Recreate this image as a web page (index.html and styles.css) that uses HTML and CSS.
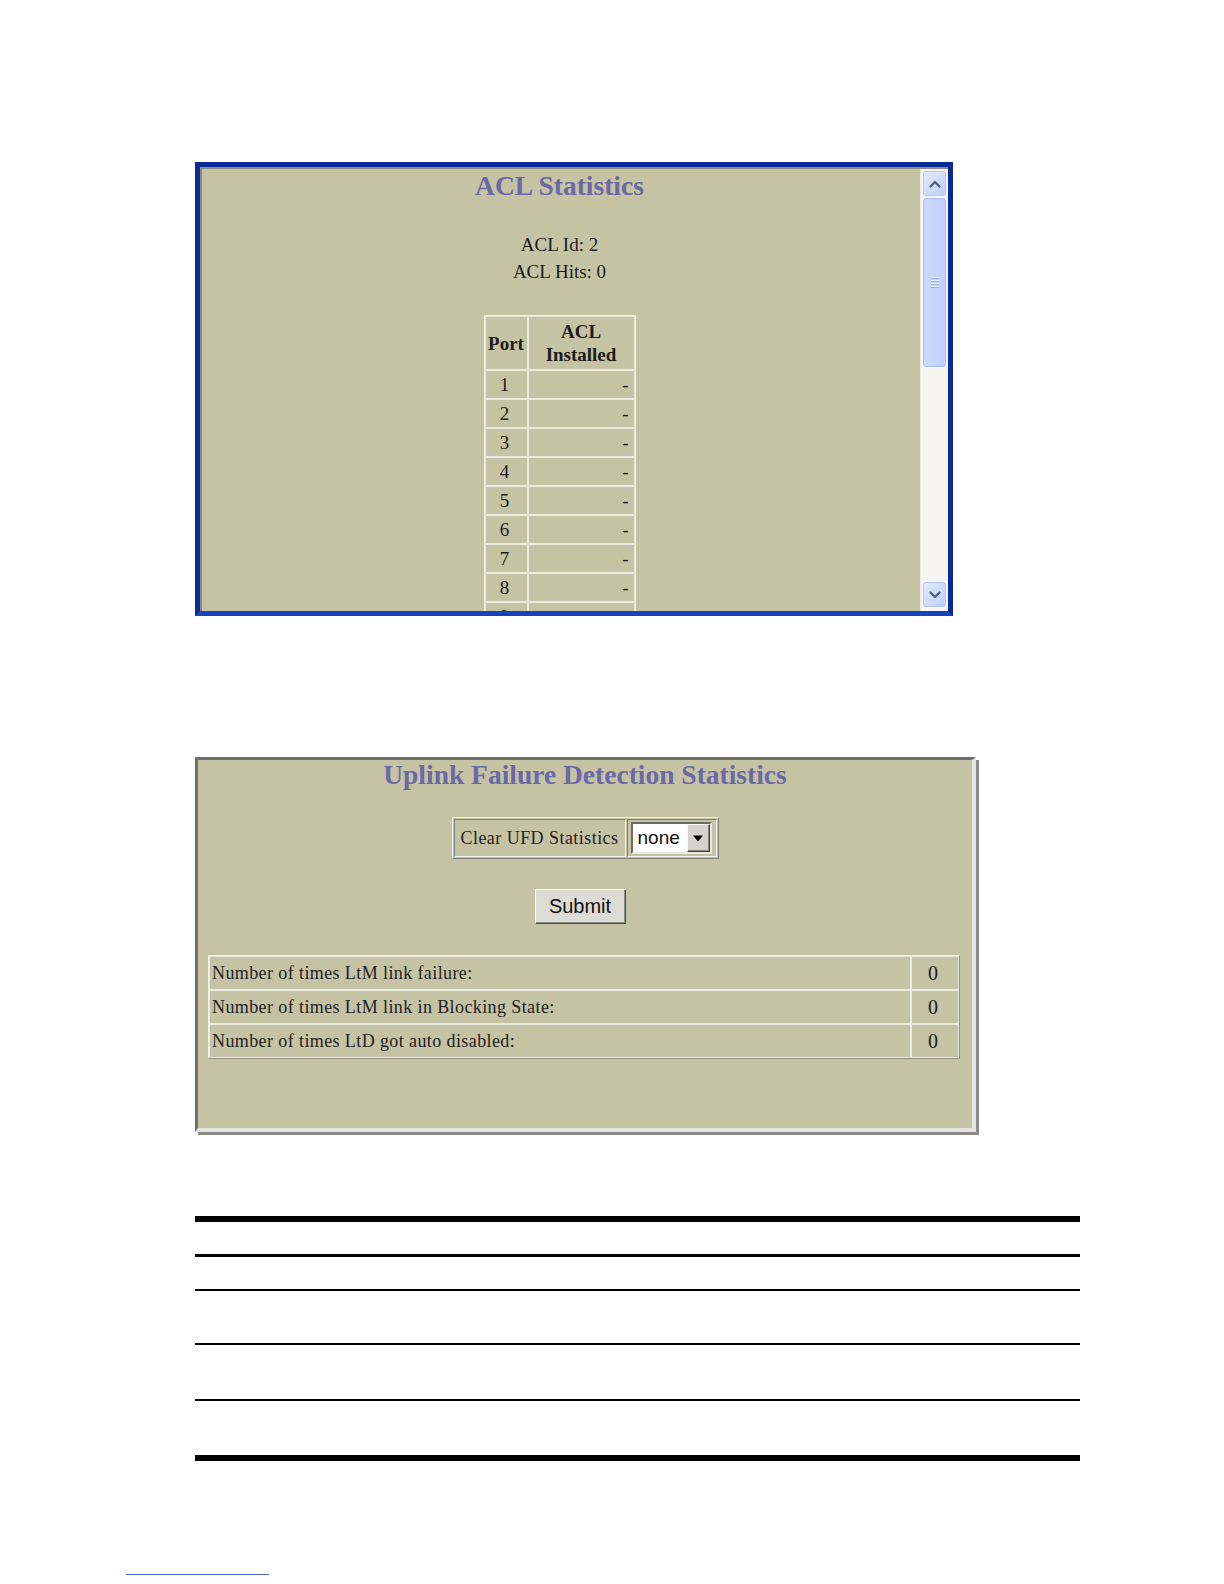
FILE: index.html
```html
<!DOCTYPE html>
<html>
<head>
<meta charset="utf-8">
<title>ACL and UFD Statistics</title>
<link rel="stylesheet" href="styles.css">
</head>
<body>
<div class="page">
  <div class="acl-frame">
    <div class="acl-inner">
      <div class="acl-content">
        <h1 class="title">ACL Statistics</h1>
        <p class="info info-first">ACL Id: 2</p>
        <p class="info">ACL Hits: 0</p>
        <table class="port-table">
          <thead>
            <tr><th class="c-port">Port</th><th class="c-acl">ACL<br>Installed</th></tr>
          </thead>
          <tbody>
            <tr><td class="c-port">1</td><td class="c-acl">-</td></tr>
            <tr><td class="c-port">2</td><td class="c-acl">-</td></tr>
            <tr><td class="c-port">3</td><td class="c-acl">-</td></tr>
            <tr><td class="c-port">4</td><td class="c-acl">-</td></tr>
            <tr><td class="c-port">5</td><td class="c-acl">-</td></tr>
            <tr><td class="c-port">6</td><td class="c-acl">-</td></tr>
            <tr><td class="c-port">7</td><td class="c-acl">-</td></tr>
            <tr><td class="c-port">8</td><td class="c-acl">-</td></tr>
            <tr><td class="c-port">9</td><td class="c-acl">-</td></tr>
          </tbody>
        </table>
      </div>
      <div class="scrollbar">
        <div class="sb-btn">
          <svg width="14" height="10" viewBox="0 0 14 10"><path d="M2.5 7.5 L7 3 L11.5 7.5" fill="none" stroke="#4d6185" stroke-width="2.4" stroke-linecap="round" stroke-linejoin="round"/></svg>
        </div>
        <div class="sb-thumb">
          <span class="grip"></span><span class="grip"></span><span class="grip"></span><span class="grip"></span>
        </div>
        <div class="sb-space"></div>
        <div class="sb-btn">
          <svg width="14" height="10" viewBox="0 0 14 10"><path d="M2.5 2.5 L7 7 L11.5 2.5" fill="none" stroke="#4d6185" stroke-width="2.4" stroke-linecap="round" stroke-linejoin="round"/></svg>
        </div>
      </div>
    </div>
  </div>

  <div class="ufd-panel">
    <h1 class="title">Uplink Failure Detection Statistics</h1>
    <table class="clear-table">
      <tr>
        <td class="clear-label">Clear UFD Statistics</td>
        <td class="clear-select">
          <div class="select">
            <span class="select-value">none</span>
            <span class="select-arrow"><svg width="12" height="7" viewBox="0 0 12 7"><path d="M1 0.5 L11 0.5 L6 6.5 Z" fill="#000"/></svg></span>
          </div>
        </td>
      </tr>
    </table>
    <div class="btn-row">
      <button class="btn" type="button">Submit</button>
    </div>
    <table class="stats-table">
      <tr><td class="s-label">Number of times LtM link failure:</td><td class="s-val">0</td></tr>
      <tr><td class="s-label">Number of times LtM link in Blocking State:</td><td class="s-val">0</td></tr>
      <tr><td class="s-label">Number of times LtD got auto disabled:</td><td class="s-val">0</td></tr>
    </table>
  </div>

  <div class="doc-table">
    <div class="doc-head"></div>
    <div class="doc-row row-1"></div>
    <div class="doc-row row-2"></div>
    <div class="doc-row row-3"></div>
    <div class="doc-row row-4"></div>
  </div>

  <div class="footer-rule"></div>
</div>
</body>
</html>
```
FILE: styles.css
```css
html, body {
  margin: 0;
  padding: 0;
  background: #ffffff;
}

.page {
  font-family: "Liberation Serif", "Times New Roman", serif;
  color: #1c1c1a;
  padding-bottom: 10px;
}

/* ---------- ACL frame ---------- */
.acl-frame {
  margin: 162px 0 0 195px;
  width: 758px;
  height: 454px;
  box-sizing: border-box;
  border: 5px solid #0a2a98;
  border-bottom-color: #1444c0;
  background: #c6c3a4;
}

.acl-inner {
  display: flex;
  height: 100%;
  box-sizing: border-box;
  border-top: 2px solid #8a8982;
  border-left: 2px solid #8a8982;
}

.acl-content {
  flex: 1;
  overflow: hidden;
  text-align: center;
  padding-top: 1px;
  padding-right: 3px;
}

.title {
  margin: 0;
  font-family: "Liberation Serif", "Times New Roman", serif;
  font-weight: bold;
  font-size: 27.5px;
  line-height: 31px;
  color: #6a6aa6;
}

.info {
  margin: 0;
  font-size: 19px;
  line-height: 27px;
}

.info-first {
  margin-top: 30px;
}

.port-table {
  margin: 30px auto 0;
  border-collapse: separate;
  border-spacing: 0;
  border: 1px solid #f1f0e8;
  font-size: 19px;
}

.port-table th,
.port-table td {
  box-sizing: border-box;
  border: 1px solid #ebe9de;
  line-height: 23px;
  padding: 2px 2px;
}

.port-table th {
  font-weight: bold;
  padding-top: 3px;
  padding-bottom: 3px;
}

.port-table .c-port {
  width: 43px;
  text-align: center;
  padding-right: 5px;
}

.port-table .c-acl {
  width: 107px;
}

.port-table td.c-acl {
  text-align: right;
  padding-right: 5px;
}

.port-table th.c-acl {
  text-align: center;
}

.port-table th.c-port {
  padding-right: 2px;
}

/* scrollbar */
.scrollbar {
  flex: none;
  width: 28px;
  box-sizing: border-box;
  display: flex;
  flex-direction: column;
  align-items: center;
  padding: 2px 0 4px;
  background: #f6f5f1;
  border-left: 1px solid #eceae2;
}

.sb-btn {
  width: 23px;
  height: 25px;
  box-sizing: border-box;
  border: 1px solid #b4c6f1;
  border-radius: 3px;
  background: linear-gradient(135deg, #e3ebfe, #bccffa);
  display: flex;
  align-items: center;
  justify-content: center;
}

.sb-thumb {
  width: 23px;
  height: 169px;
  margin-top: 2px;
  box-sizing: border-box;
  border: 1px solid #aac0f1;
  border-radius: 3px;
  background: linear-gradient(90deg, #cbd9fd, #bfd1fb);
  display: flex;
  flex-direction: column;
  align-items: center;
  justify-content: center;
  gap: 1px;
}

.grip {
  display: block;
  width: 8px;
  height: 1px;
  background: #eef3ff;
  border-bottom: 1px solid #97afe6;
}

.sb-space {
  flex: 1;
}

/* ---------- UFD panel ---------- */
.ufd-panel {
  margin: 141px 0 0 195px;
  width: 781px;
  height: 375px;
  box-sizing: border-box;
  border-style: solid;
  border-width: 3px 4px 4px 3px;
  border-color: #6f6f6c #e4e4e0 #e4e4e0 #6f6f6c;
  box-shadow: 3px 3px 0 #8a8a88;
  background: #c6c3a4;
  text-align: center;
}

.ufd-panel .title {
  line-height: 30px;
}

.clear-table {
  margin: 27px auto 0;
  border-collapse: separate;
  border-spacing: 1px;
  border: 1px solid;
  border-color: #f2f2ee #7e7e7a #7e7e7a #f2f2ee;
}

.clear-table td {
  border: 1px solid;
  border-color: #7e7e7a #f2f2ee #f2f2ee #7e7e7a;
  padding: 0;
  height: 36px;
}

.clear-label {
  width: 172px;
  box-sizing: border-box;
  font-size: 18px;
  letter-spacing: 0.45px;
  text-align: center;
  color: #222;
}

.clear-select {
  width: 90px;
  box-sizing: border-box;
  padding: 2px 3px !important;
}

.select {
  display: flex;
  width: 81px;
  height: 32px;
  box-sizing: border-box;
  border: 2px solid;
  border-color: #6a6a66 #e8e8e4 #e8e8e4 #6a6a66;
  background: #ffffff;
}

.select-value {
  flex: 1;
  text-align: left;
  padding-left: 5px;
  font-family: "Liberation Sans", Arial, sans-serif;
  font-size: 19px;
  line-height: 28px;
  color: #111;
}

.select-arrow {
  width: 23px;
  box-sizing: border-box;
  background: #d6d3cb;
  border: 1px solid;
  border-color: #fafafa #404040 #404040 #fafafa;
  box-shadow: inset -1px -1px 0 #8a8a86;
  display: flex;
  align-items: center;
  justify-content: center;
}

.btn-row {
  display: flex;
  justify-content: center;
  padding-right: 10px;
  margin-top: 30px;
}

.btn {
  width: 91px;
  height: 35px;
  box-sizing: border-box;
  padding: 0;
  font-family: "Liberation Sans", Arial, sans-serif;
  font-size: 20px;
  color: #111;
  background: #dcdbd6;
  border: 1px solid;
  border-color: #fbfbfb #4a4a4a #4a4a4a #fbfbfb;
  box-shadow: inset -1px -1px 0 #8f8f8b;
}

.stats-table {
  margin: 31px auto 0 10px;
  width: 752px;
  border-collapse: separate;
  border-spacing: 0;
  border: 1px solid;
  border-color: #f2f2ee #8e8d86 #8e8d86 #f2f2ee;
}

.stats-table td {
  border: 1px solid #ebeae2;
  height: 32px;
  padding: 0 2px;
  line-height: 32px;
}

.s-label {
  text-align: left;
  font-size: 18px;
  letter-spacing: 0.4px;
  color: #222;
}

.s-val {
  width: 48px;
  box-sizing: border-box;
  text-align: center;
  padding-right: 6px !important;
  font-size: 20px;
}

/* ---------- document table rules ---------- */
.doc-table {
  margin: 84px 0 0 195px;
  width: 885px;
  border-top: 6px solid #000;
  border-bottom: 6px solid #000;
}

.doc-head {
  height: 32px;
  border-bottom: 3px solid #000;
}

.doc-row {
  border-bottom: 2px solid #000;
}

.row-1 { height: 32px; }
.row-2 { height: 52px; }
.row-3 { height: 54px; }
.row-4 { height: 54px; border-bottom: none; }

.footer-rule {
  margin: 113px 0 0 126px;
  width: 143px;
  border-top: 1px solid #4a62c8;
}
```
